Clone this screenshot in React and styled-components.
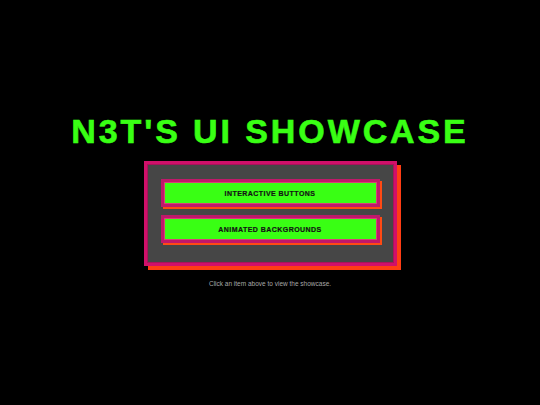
import React from 'react';
import styled, { createGlobalStyle } from 'styled-components';

const GlobalStyle = createGlobalStyle`
  html, body {
    margin: 0;
    padding: 0;
    background: #000;
  }
  body {
    font-family: 'Liberation Sans', Arial, sans-serif;
  }
`;

const Page = styled.div`
  width: 540px;
  height: 405px;
  background: #000;
  display: flex;
  flex-direction: column;
  align-items: center;
  padding-top: 112px;
  box-sizing: border-box;
`;

const Title = styled.h1`
  margin: 0 0 11px 0;
  font-family: 'Liberation Sans', Arial, sans-serif;
  font-weight: 900;
  font-size: 34px;
  line-height: 38px;
  letter-spacing: 2.9px;
  color: #39ff14;
  -webkit-text-stroke: 0.6px #39ff14;
`;

const Panel = styled.div`
  width: 253px;
  box-sizing: border-box;
  background: #464646;
  border: 3px solid #d0106a;
  box-shadow: inset 0 0 0 1px #a8145a, 4px 4px 0 #ff3d14;
  padding: 15px 14px 20px 14px;
  display: flex;
  flex-direction: column;
  gap: 8px;
`;

const MenuButton = styled.button`
  display: flex;
  align-items: center;
  justify-content: center;
  height: 28px;
  width: 100%;
  box-sizing: border-box;
  background: #39ff14;
  border: 3px solid #c0186a;
  box-shadow: inset 0 0 0 1px #d8407a, 2px 2px 0 #ff4a14;
  font-family: 'Liberation Sans', Arial, sans-serif;
  font-weight: 700;
  font-size: 7px;
  letter-spacing: 0.45px;
  text-transform: uppercase;
  color: #141414;
  -webkit-text-stroke: 0.2px #141414;
  padding: 0;
  cursor: pointer;
`;

const Hint = styled.p`
  margin: 14px 0 0 0;
  font-size: 6.5px;
  color: #a8a8a8;
`;

const items = ['Interactive Buttons', 'Animated Backgrounds'];

export default function App() {
  return (
    <>
      <GlobalStyle />
      <Page>
        <Title>N3T'S UI SHOWCASE</Title>
        <Panel>
          {items.map((item) => (
            <MenuButton key={item}>{item}</MenuButton>
          ))}
        </Panel>
        <Hint>Click an item above to view the showcase.</Hint>
      </Page>
    </>
  );
}
